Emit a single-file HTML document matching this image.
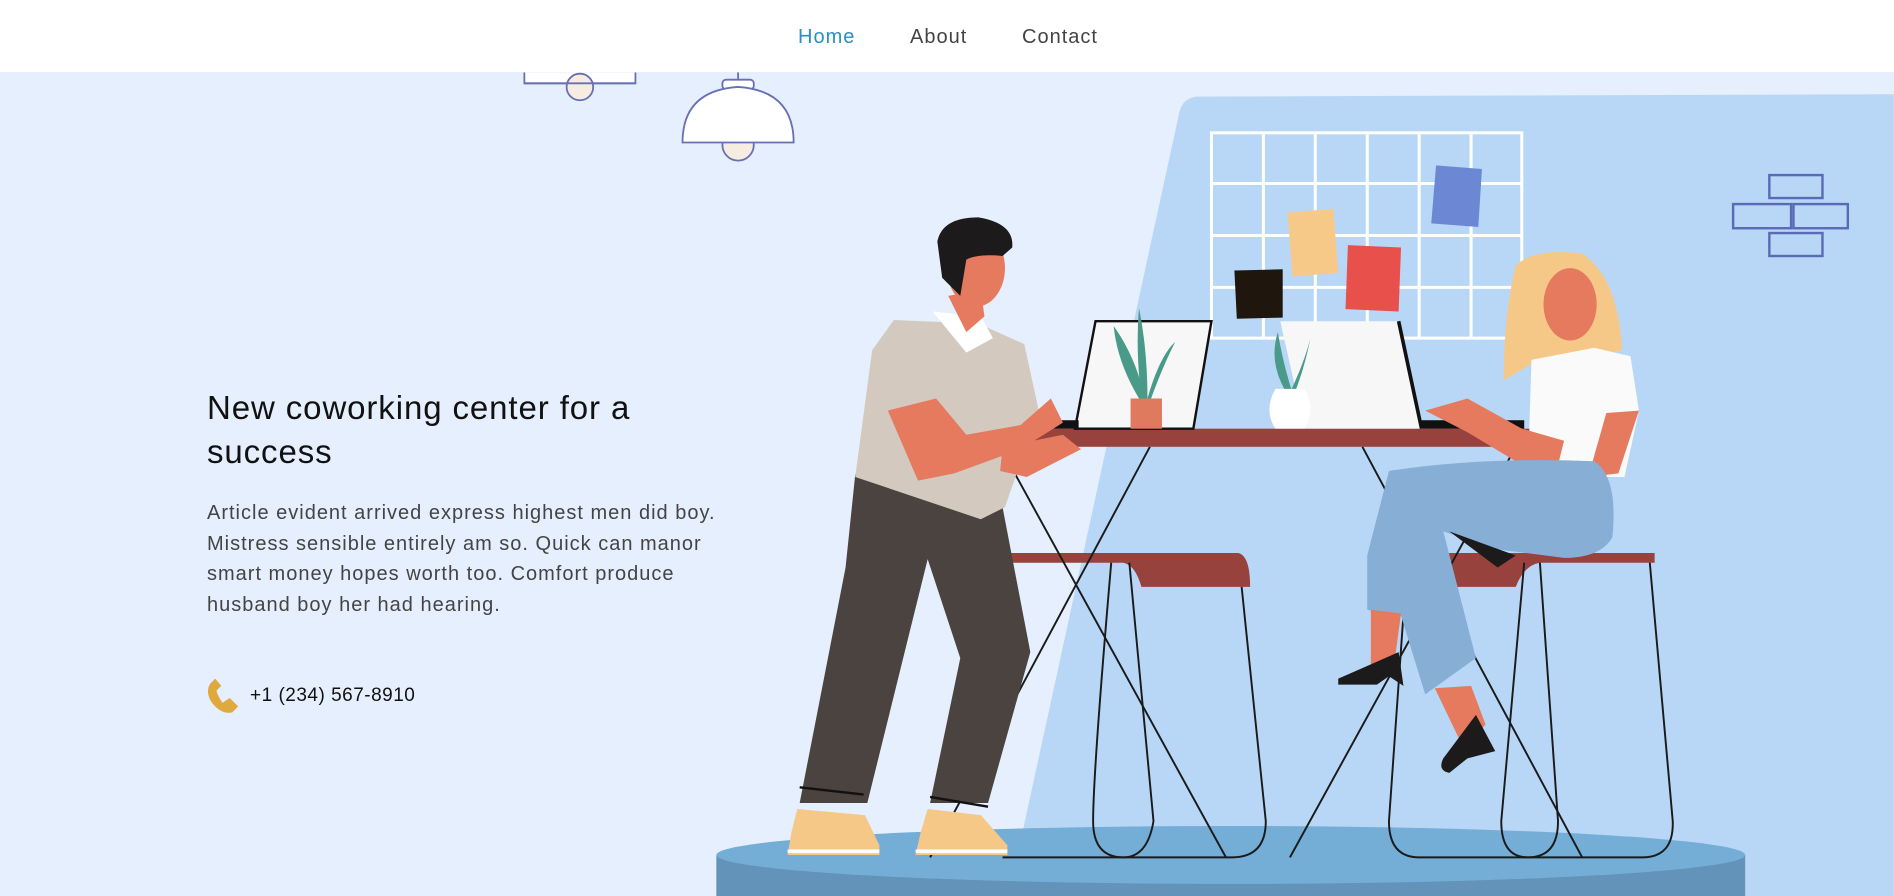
<!DOCTYPE html>
<html><head><meta charset="utf-8"><style>
*{margin:0;padding:0;box-sizing:border-box}
body{width:1894px;height:896px;overflow:hidden;background:#e5effd;font-family:"Liberation Sans",sans-serif;position:relative}
nav{position:absolute;top:0;left:0;width:1894px;height:72px;background:#fff;z-index:3}
nav a{position:absolute;top:26px;font-size:20px;letter-spacing:1px;color:#444;text-decoration:none}
svg{position:absolute;left:0;top:0;z-index:1}
h1{position:absolute;left:207px;top:386px;font-size:33px;letter-spacing:0.9px;font-weight:normal;line-height:44px;color:#111;z-index:2;width:560px}
p{position:absolute;left:207px;top:498px;font-size:20px;letter-spacing:1px;line-height:30.5px;color:#444;width:760px;z-index:2;white-space:nowrap}
.ph{position:absolute;left:250px;top:685px;font-size:19px;letter-spacing:0.5px;color:#111;z-index:2}
</style></head><body>
<nav><a style="left:798px;color:#2a8fc4">Home</a><a style="left:910px">About</a><a style="left:1022px">Contact</a></nav>
<svg width="1894" height="896" viewBox="0 0 1568 742">
<path d="M990 80 L1568 78 L1568 742 L835 742 L976 95 Q978 82 990 80Z" fill="#b8d7f6"/>
<g stroke="#fff" stroke-width="2.5" fill="none">
<rect x="1003" y="110" width="257" height="170"/>
<path d="M1046 110V280M1089 110V280M1132 110V280M1175 110V280M1218 110V280M1003 152H1260M1003 195H1260M1003 238H1260"/></g>
<polygon points="1189,137 1227,140 1224,188 1185,185" fill="#6c88d4"/>
<polygon points="1066,176 1104,173 1108,226 1070,229" fill="#f7c988"/>
<polygon points="1116,203 1160,205 1158,258 1114,256" fill="#e8504c"/>
<polygon points="1022,224 1062,223 1062,263 1024,264" fill="#1f160d"/>
<g stroke="#6870b4" stroke-width="1.5" fill="#fff">
<path d="M434 60V69H526V60"/><circle cx="480" cy="72" r="11" fill="#f6ede0"/><path d="M434 69H526" />
<path d="M611 60V68" fill="none"/><rect x="598" y="66" width="26" height="8" rx="3"/>
<circle cx="611" cy="120" r="13" fill="#f6ede0"/>
<path d="M565 118 Q565 75 611 72 Q657 75 657 118Z"/></g>
<g stroke="#5a6bb5" stroke-width="2" fill="none">
<rect x="1465" y="145" width="44" height="19"/><rect x="1435" y="169" width="48" height="20"/><rect x="1485" y="169" width="45" height="20"/><rect x="1465" y="193" width="44" height="19"/></g>
<rect x="593" y="708" width="852" height="40" fill="#6393b9"/>
<ellipse cx="1019" cy="708" rx="426" ry="24" fill="#74aed6"/>
<path d="M830 458H1025Q1035 460 1035 486H945Q940 468 930 466H830Z" fill="#97423d"/>
<path d="M1370 458H1200Q1195 470 1195 486H1255Q1262 468 1275 466H1370Z" fill="#97423d"/>
<g stroke="#1a1a1a" stroke-width="1.6" fill="none">
<path d="M920 466 Q905 640 905 680 Q905 710 930 710 Q950 710 955 680 L935 466"/>
<path d="M1028 486 L1048 680 Q1048 710 1020 710 L830 710"/>
<path d="M1165 466 L1150 680 Q1150 710 1175 710 L1360 710 Q1386 710 1385 680 L1366 466"/>
<path d="M1262 466 L1243 680 Q1243 710 1265 710 Q1290 710 1290 680 L1275 466"/>
<path d="M828 370 L1015 710 M952 370 L770 710 M1128 370 L1310 710 M1255 370 L1068 710"/>
</g>
<rect x="782" y="355" width="518" height="15" fill="#97423d"/>
<polygon points="907,266 1003,266 988,355 890,355" fill="#f7f7f7" stroke="#111" stroke-width="2"/>
<rect x="805" y="348" width="88" height="7" fill="#111"/>
<polygon points="1060,266 1158,266 1177,355 1080,355" fill="#f7f7f7"/>
<path d="M1158 266 L1177 355" stroke="#111" stroke-width="3"/>
<rect x="1177" y="348" width="85" height="7" fill="#111"/>
<g fill="#4a9a8a"><path d="M945 330 Q940 290 943 255 Q950 290 950 330Z"/><path d="M943 330 Q925 300 922 270 Q940 295 948 330Z"/><path d="M950 330 Q960 295 973 283 Q962 305 953 330Z"/>
<path d="M1065 325 Q1050 300 1058 275 Q1062 300 1070 325Z"/><path d="M1068 325 Q1080 300 1085 280 Q1080 305 1072 325Z"/></g>
<rect x="936" y="330" width="26" height="25" fill="#e07a5f"/>
<path d="M1056 322H1080Q1090 340 1080 355H1056Q1046 340 1056 322Z" fill="#fff"/>
<polygon points="708,393 830,420 853,540 818,665 770,665 795,545 768,463 718,665 662,665 700,470" fill="#4a4340"/>
<path d="M662 652 L715 658 M770 660 L818 668" stroke="#111" stroke-width="2"/>
<path d="M660 670 L716 675 L728 700 L728 708 L652 708 L655 690Z" fill="#f5c888"/>
<path d="M768 670 L812 675 L834 700 L834 708 L758 708 L762 690Z" fill="#f5c888"/>
<path d="M652 705H728M758 705H834" stroke="#fff" stroke-width="3"/>
<polygon points="740,265 810,268 848,285 860,340 832,420 812,430 708,395 722,290" fill="#d3c9bf"/>
<polygon points="772,258 800,292 822,280 812,262" fill="#fff"/>
<path d="M785 245 L800 275 L815 262 L812 240Z" fill="#e57a5f"/>
<ellipse cx="808" cy="222" rx="24" ry="32" fill="#e57a5f"/>
<path d="M776 200 Q780 180 810 180 Q840 185 838 205 L830 212 Q810 210 800 215 L795 245 L780 230Z" fill="#1c1a1a"/>
<path d="M735 340 L775 330 L800 360 L845 352 L870 330 L880 350 L845 372 L790 392 L760 398 Z" fill="#e57a5f"/>
<path d="M830 370 L880 360 L895 372 L850 395 L828 390Z" fill="#e57a5f"/>
<path d="M1255 220 Q1270 205 1310 210 Q1340 230 1343 290 L1320 295 L1300 300 L1270 300 L1245 315 Q1245 260 1255 220Z" fill="#f5c888"/>
<ellipse cx="1300" cy="252" rx="22" ry="30" fill="#e57a5f"/>
<path d="M1268 298 L1320 288 L1350 295 L1357 340 L1345 395 L1265 395Z" fill="#fafafa"/>
<path d="M1357 340 L1340 392 L1315 395 L1330 342Z" fill="#e57a5f"/>
<path d="M1180 340 L1215 330 L1260 355 L1295 365 L1290 385 L1255 382 L1215 358Z" fill="#e57a5f"/>
<path d="M1150 390 Q1230 378 1320 382 Q1340 395 1335 445 Q1325 462 1295 462 L1240 455 L1195 440 L1222 545 L1180 575 L1160 510 L1132 505 L1132 460 Z" fill="#87aed4"/>
<path d="M1200 440 L1255 460 L1240 470Z" fill="#1c1a1a"/>
<path d="M1135 505 L1160 508 L1155 545 L1135 555 Z" fill="#e57a5f"/>
<path d="M1188 570 L1218 568 L1230 600 L1212 620 Z" fill="#e57a5f"/>
<path d="M1108 562 Q1140 548 1158 540 L1162 568 L1150 560 L1140 567 L1108 567Z" fill="#1c1a1a"/>
<path d="M1222 592 L1238 622 L1215 628 L1200 640 Q1190 638 1195 628Z" fill="#1c1a1a"/>
<path d="M176 566 Q172 572 176 580 Q184 592 194 590 L199 585 L192 578 L186 582 Q182 576 181 572 L185 568 L180 562Z" fill="#e0a93e" transform="translate(-2 0)"/>
</svg>
<h1>New coworking center for a<br>success</h1>
<p>Article evident arrived express highest men did boy.<br>Mistress sensible entirely am so. Quick can manor<br>smart money hopes worth too. Comfort produce<br>husband boy her had hearing.</p>
<div class="ph">+1 (234) 567-8910</div>
</body></html>
